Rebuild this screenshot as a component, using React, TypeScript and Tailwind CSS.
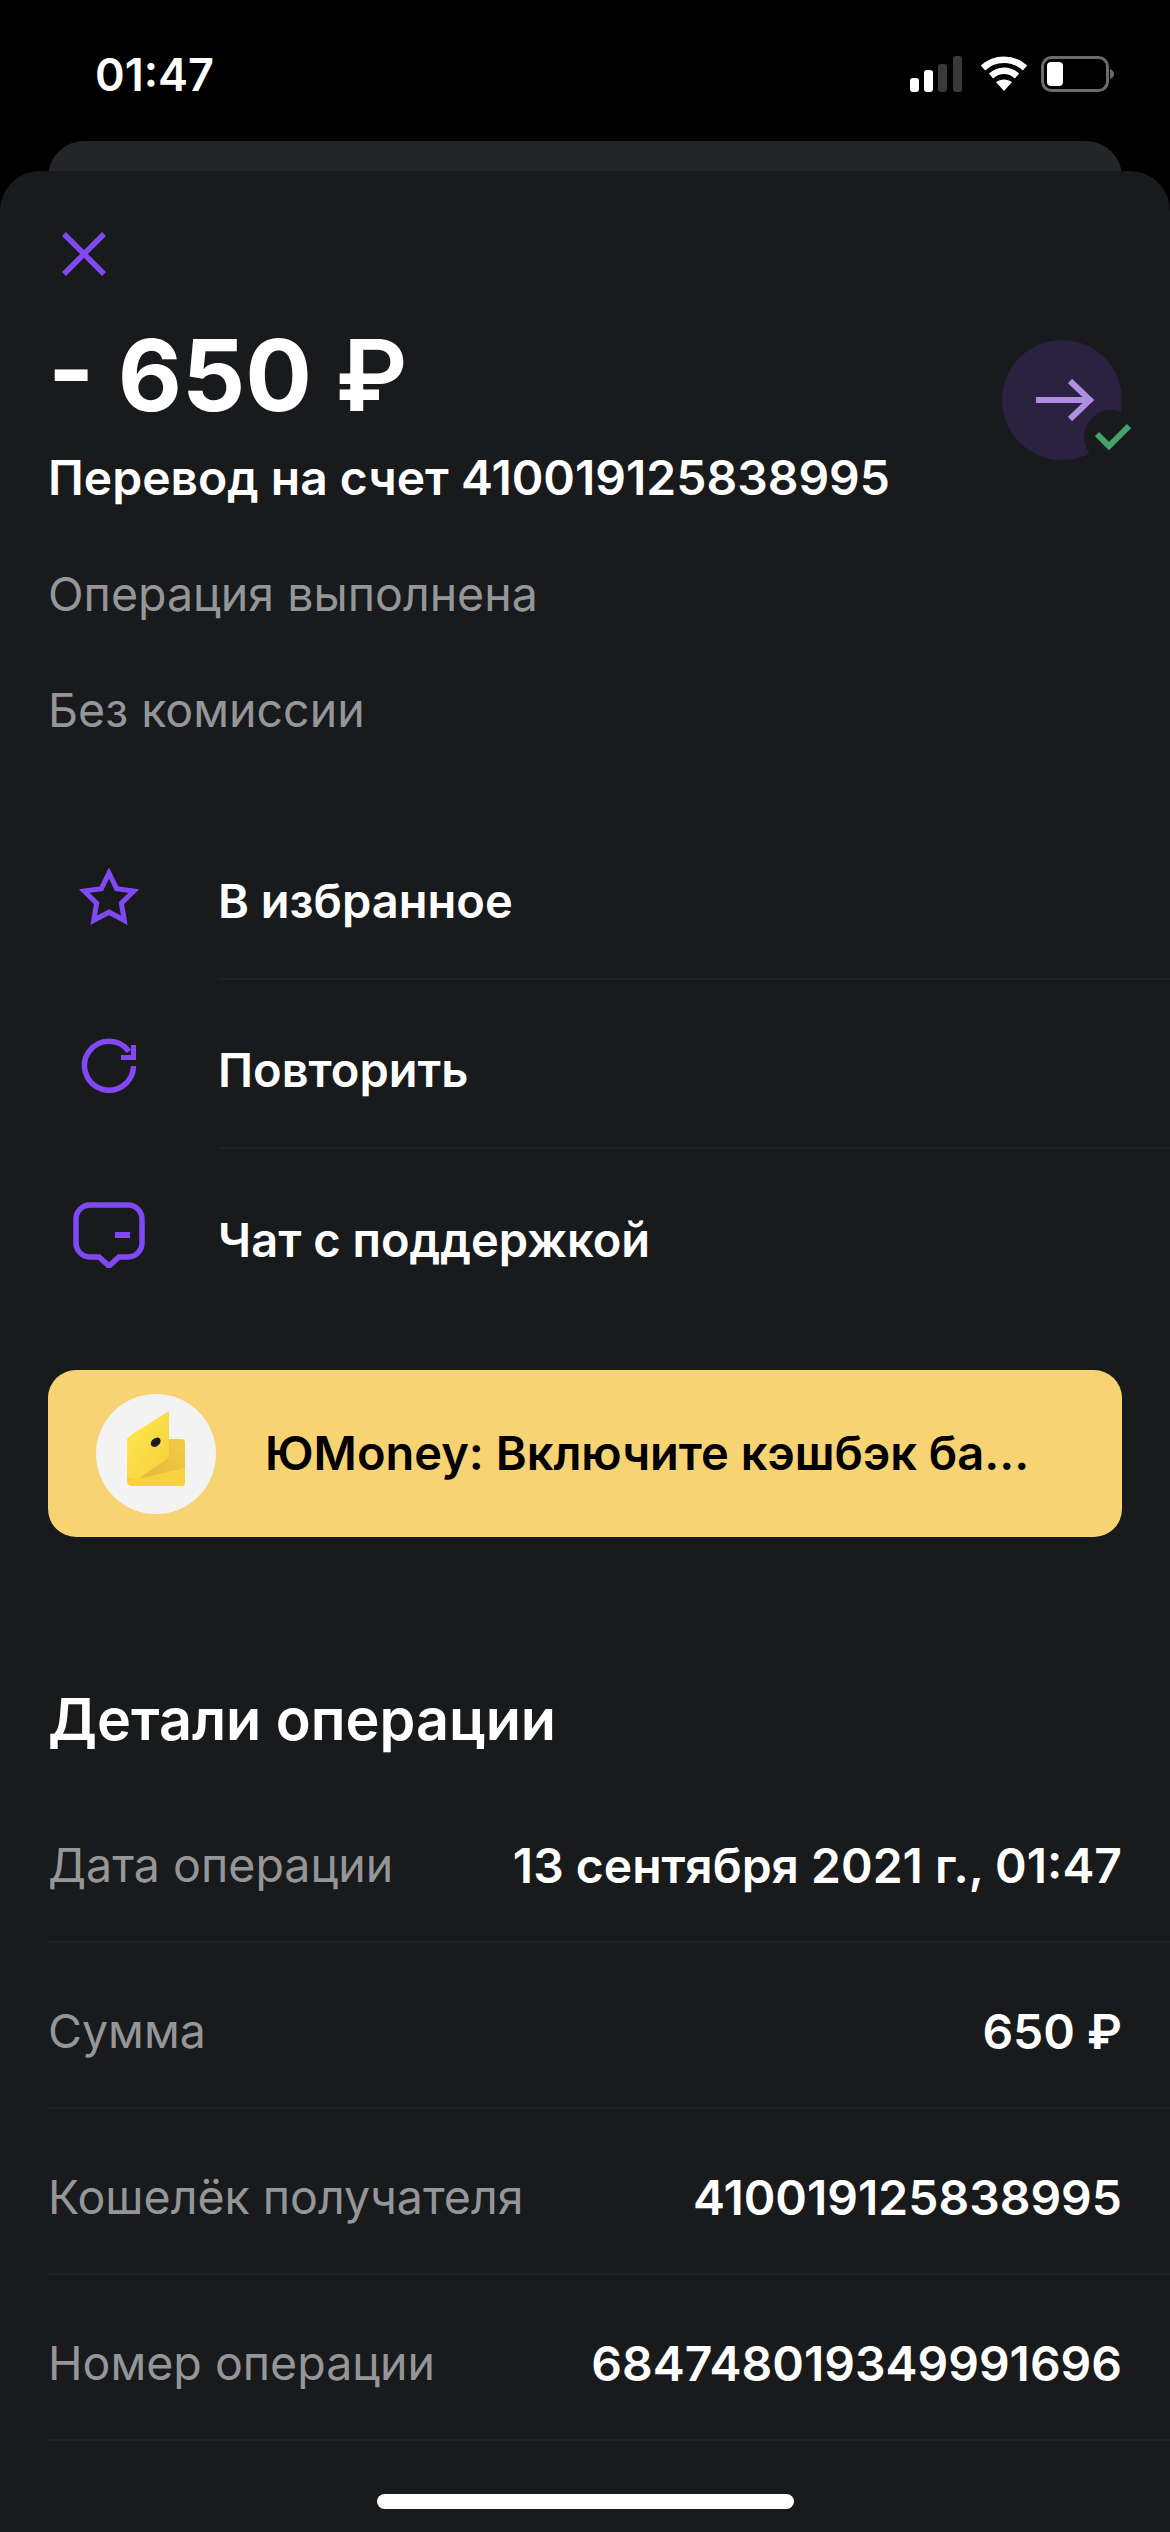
// App.tsx — operation details sheet
const FONT = "font-['Inter','Noto_Sans',sans-serif]";

const ACTIONS = [
  { label: "В избранное", icon: "star" },
  { label: "Повторить", icon: "repeat" },
  { label: "Чат с поддержкой", icon: "chat" },
];

const DETAILS = [
  { label: "Дата операции", value: "13 сентября 2021 г., 01:47" },
  { label: "Сумма", value: "650 ₽" },
  { label: "Кошелёк получателя", value: "410019125838995" },
  { label: "Номер операции", value: "684748019349991696" },
];

function ActionIcon({ name }: { name: string }) {
  if (name === "star") {
    return (
      <svg width="62" height="58" viewBox="0 0 62 58" fill="none" aria-hidden="true">
        <path
          d="M31 5l7.6 15.6 17.2 2.5-12.4 12.1 2.9 17.1L31 44.2l-15.3 8.1 2.9-17.1L6.200 23.100l17.200-2.500z"
          stroke="#8049f5"
          strokeWidth="5"
        />
      </svg>
    );
  }
  if (name === "repeat") {
    return (
      <svg width="56" height="56" viewBox="0 0 56 56" fill="none" aria-hidden="true">
        <path
          d="M52.500 28A24.500 24.500 0 1 1 48 13.500"
          stroke="#8049f5"
          strokeWidth="5.500"
        />
        <path d="M55 7v15H40v-5h10V7z" fill="#8049f5" />
      </svg>
    );
  }
  return (
    <svg width="72" height="66" viewBox="0 0 72 66" fill="none" aria-hidden="true">
      <path
        d="M17 3h38a14 14 0 0 1 14 14v24a14 14 0 0 1-14 14H46l-10 9-10-9h-9A14 14 0 0 1 3 41V17A14 14 0 0 1 17 3z"
        stroke="#8049f5"
        strokeWidth="5.500"
      />
      <rect x="42" y="30" width="15" height="6" fill="#8049f5" />
    </svg>
  );
}

function WalletLogo() {
  return (
    <svg width="120" height="120" viewBox="0 0 120 120" aria-hidden="true">
      <defs>
        <linearGradient id="flap" x1="0" y1="0" x2="1" y2="1">
          <stop offset="0" stopColor="#ffe94f" />
          <stop offset="1" stopColor="#f6cf3a" />
        </linearGradient>
        <linearGradient id="fold" x1="0" y1="1" x2="1" y2="0">
          <stop offset="0" stopColor="#e6b43a" />
          <stop offset="1" stopColor="#f3cd45" />
        </linearGradient>
      </defs>
      <circle cx="60" cy="60" r="60" fill="#f3f3f3" />
      <path
        d="M31 45h54a4 4 0 0 1 4 4v39a4 4 0 0 1-4 4H36a5 5 0 0 1-5-5z"
        fill="#f8d13f"
      />
      <path d="M42 85l31-22 0-18h12a4 4 0 0 1 4 4v25z" fill="url(#fold)" />
      <path
        d="M31 48c0-3 1-5 4-7l38-24v46L42 85H36a5 5 0 0 1-5-5z"
        fill="url(#flap)"
      />
      <path d="M31 80V87a5 5 0 0 0 5 5h49a4 4 0 0 0 4-4V74L42 85H36a5 5 0 0 1-5-5z" fill="#f8d13f" />
      <ellipse cx="59.700" cy="48.300" rx="5.500" ry="4" transform="rotate(-40 59.700 48.300)" fill="#1b1c1e" />
    </svg>
  );
}

export default function App() {
  return (
    <div className={`${FONT} relative h-[2532px] w-[1170px] overflow-hidden bg-black text-white`}>
      {/* Status bar */}
      <div className="flex h-[141px] items-start justify-between pl-[95px] pr-[56px] pt-[48px]">
        <span className="text-[45px] font-semibold leading-[54px]">01:47</span>
        <div className="flex items-center gap-[13px] pt-[8px]">
          <svg width="57" height="36" viewBox="0 0 57 36" aria-hidden="true">
            <rect x="0" y="22" width="9" height="14" rx="3" fill="#fff" />
            <rect x="14" y="14" width="9" height="22" rx="3" fill="#fff" />
            <rect x="28" y="8" width="9" height="28" rx="3" fill="#3a3a3a" />
            <rect x="43" y="0" width="9" height="36" rx="3" fill="#3a3a3a" />
          </svg>
          <svg width="48" height="36" viewBox="0 0 48 36" fill="none" aria-hidden="true">
            <path d="M3 12c12-11 30-11 42 0" stroke="#fff" strokeWidth="6.500" />
            <path d="M11 20c8-7 18-7 26 0" stroke="#fff" strokeWidth="6.500" />
            <path d="M24 35l-8-9c5-3.500 11-3.500 16 0z" fill="#fff" />
          </svg>
          <svg width="73" height="36" viewBox="0 0 73 36" fill="none" aria-hidden="true">
            <rect x="1.500" y="1.500" width="65" height="33" rx="9" stroke="#6b6b6b" strokeWidth="3" />
            <rect x="6" y="6" width="16" height="24" rx="4" fill="#fff" />
            <path d="M69 13c3 1 4 3 4 5s-1 4-4 5z" fill="#6b6b6b" />
          </svg>
        </div>
      </div>

      {/* Card peeking out behind the sheet */}
      <div className="mx-[48px] -mb-[10px] h-[40px] rounded-t-[36px] bg-[#242527]" />

      {/* Sheet */}
      <div className="relative h-[2400px] rounded-t-[40px] bg-[#191a1c]">
        <div className="pl-[48px] pt-[60px]">
          <svg width="46" height="46" viewBox="0 0 46 46" fill="none" className="ml-[13px]" aria-hidden="true">
            <path d="M3 3l40 40M43 3L3 43" stroke="#8049f5" strokeWidth="5.500" />
          </svg>
        </div>

        {/* Amount */}
        <div className="flex items-start justify-between pl-[48px] pr-[48px]">
          <div>
            <div className="mt-[40px] text-[99px] font-bold leading-[116px]">
              - 650 <span className="font-semibold">₽</span>
            </div>
            <div className="mt-[17px] text-[48px] font-semibold leading-[56px]">Перевод на счет 410019125838995</div>
          </div>
          <div className="relative mt-[63px] flex h-[120px] w-[120px] items-center justify-center rounded-full bg-[#2b2140]">
            <svg width="58" height="44" viewBox="0 0 58 44" fill="none" className="ml-[6px]" aria-hidden="true">
              <path d="M0 22h54M34 3l20 19-20 19" stroke="#b08fe3" strokeWidth="6" />
            </svg>
            <div className="absolute -bottom-[4px] -right-[16px] flex h-[54px] w-[54px] items-center justify-center rounded-full bg-[#191a1c]">
              <svg width="36" height="28" viewBox="0 0 36 28" fill="none" className="ml-[4px]" aria-hidden="true">
                <path d="M2 11l12 12L34 3" stroke="#43a36b" strokeWidth="6" />
              </svg>
            </div>
          </div>
        </div>

        <div className="mt-[60px] px-[48px] text-[46.500px] leading-[56px] text-[#959698]">Операция выполнена</div>
        <div className="mt-[60px] px-[48px] text-[46.500px] leading-[56px] text-[#959698]">Без комиссии</div>

        {/* Actions */}
        <div className="mt-[73px]">
          {ACTIONS.map((a, i) => (
            <div key={a.label} className="flex h-[169px] items-stretch">
              <div className="flex w-[218px] items-center justify-center pt-[2px]">
                <ActionIcon name={a.icon} />
              </div>
              <div className={`flex flex-1 items-center pt-[14px] text-[47px] font-semibold ${i < ACTIONS.length - 1 ? "border-b-2 border-[#212225]" : ""}`}>
                {a.label}
              </div>
            </div>
          ))}
        </div>

        {/* Promo banner */}
        <div className="mx-[48px] mt-[52px] flex h-[167px] items-center rounded-[28px] bg-[#f7d373] pl-[48px] text-black">
          <WalletLogo />
          <span className="ml-[49px] text-[47px] font-semibold">ЮMoney: Включите кэшбэк ба...</span>
        </div>

        {/* Details */}
        <div className="mt-[150px] px-[48px] text-[57.500px] font-semibold leading-[64px]">Детали операции</div>
        <div className="ml-[48px] mt-[26px]">
          {DETAILS.map((d) => (
            <div key={d.label} className="flex h-[166px] items-center justify-between border-b-2 border-[#212225] pr-[48px] pt-[14px]">
              <span className="text-[46.500px] text-[#959698]">{d.label}</span>
              <span className="text-[48px] font-semibold">{d.value}</span>
            </div>
          ))}
        </div>
      </div>

      {/* Home indicator */}
      <div className="absolute bottom-[23px] left-[377px] h-[15px] w-[417px] rounded-full bg-white" />
    </div>
  );
}
